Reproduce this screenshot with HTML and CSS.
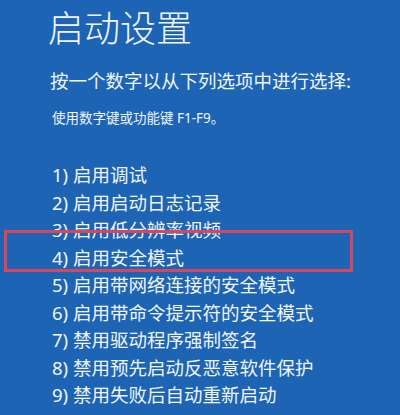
FILE: index.html
```html
<!DOCTYPE html>
<html lang="zh-CN">
<head>
<meta charset="utf-8">
<title>启动设置</title>
<link rel="stylesheet" href="styles.css">
</head>
<body>
<main class="screen">
  <h1 class="title">启动设置</h1>
  <p class="prompt">按一个数字以从下列选项中进行选择:</p>
  <p class="hint">使用数字键或功能键 F1-F9。</p>
  <ol class="options">
    <li>1) 启用调试</li>
    <li>2) 启用启动日志记录</li>
    <li>3) 启用低分辨率视频</li>
    <li class="highlight">4) 启用安全模式</li>
    <li>5) 启用带网络连接的安全模式</li>
    <li>6) 启用带命令提示符的安全模式</li>
    <li>7) 禁用驱动程序强制签名</li>
    <li>8) 禁用预先启动反恶意软件保护</li>
    <li>9) 禁用失败后自动重新启动</li>
  </ol>
</main>
</body>
</html>
```
FILE: styles.css
```css
html, body {
  margin: 0;
  padding: 0;
  background: #1d64b4;
}
.screen {
  width: 400px;
  height: 415px;
  overflow: hidden;
  color: #f2f6fb;
  font-family: "Noto Sans", "Noto Sans CJK SC", sans-serif;
  display: flex;
  flex-direction: column;
}
.title {
  margin: 0 0 0 48px;
  font-size: 36px;
  line-height: 52px;
  font-weight: 300;
  font-family: "Noto Sans CJK SC", sans-serif;
}
.prompt {
  margin: 17px 0 0 50px;
  font-size: 18.5px;
  line-height: 24px;
  font-weight: 400;
}
.hint {
  margin: 16px 0 0 52px;
  font-size: 13.5px;
  line-height: 18px;
}
.options {
  list-style: none;
  margin: 34px 0 0 52px;
  padding: 0;
  font-size: 18.5px;
  line-height: 27.5px;
}
.options li {
  white-space: nowrap;
}
.highlight {
  position: relative;
}
.highlight::after {
  content: "";
  position: absolute;
  left: -48px;
  top: -14px;
  width: 343px;
  height: 36px;
  border: 3px solid #d5475c;
}
```
